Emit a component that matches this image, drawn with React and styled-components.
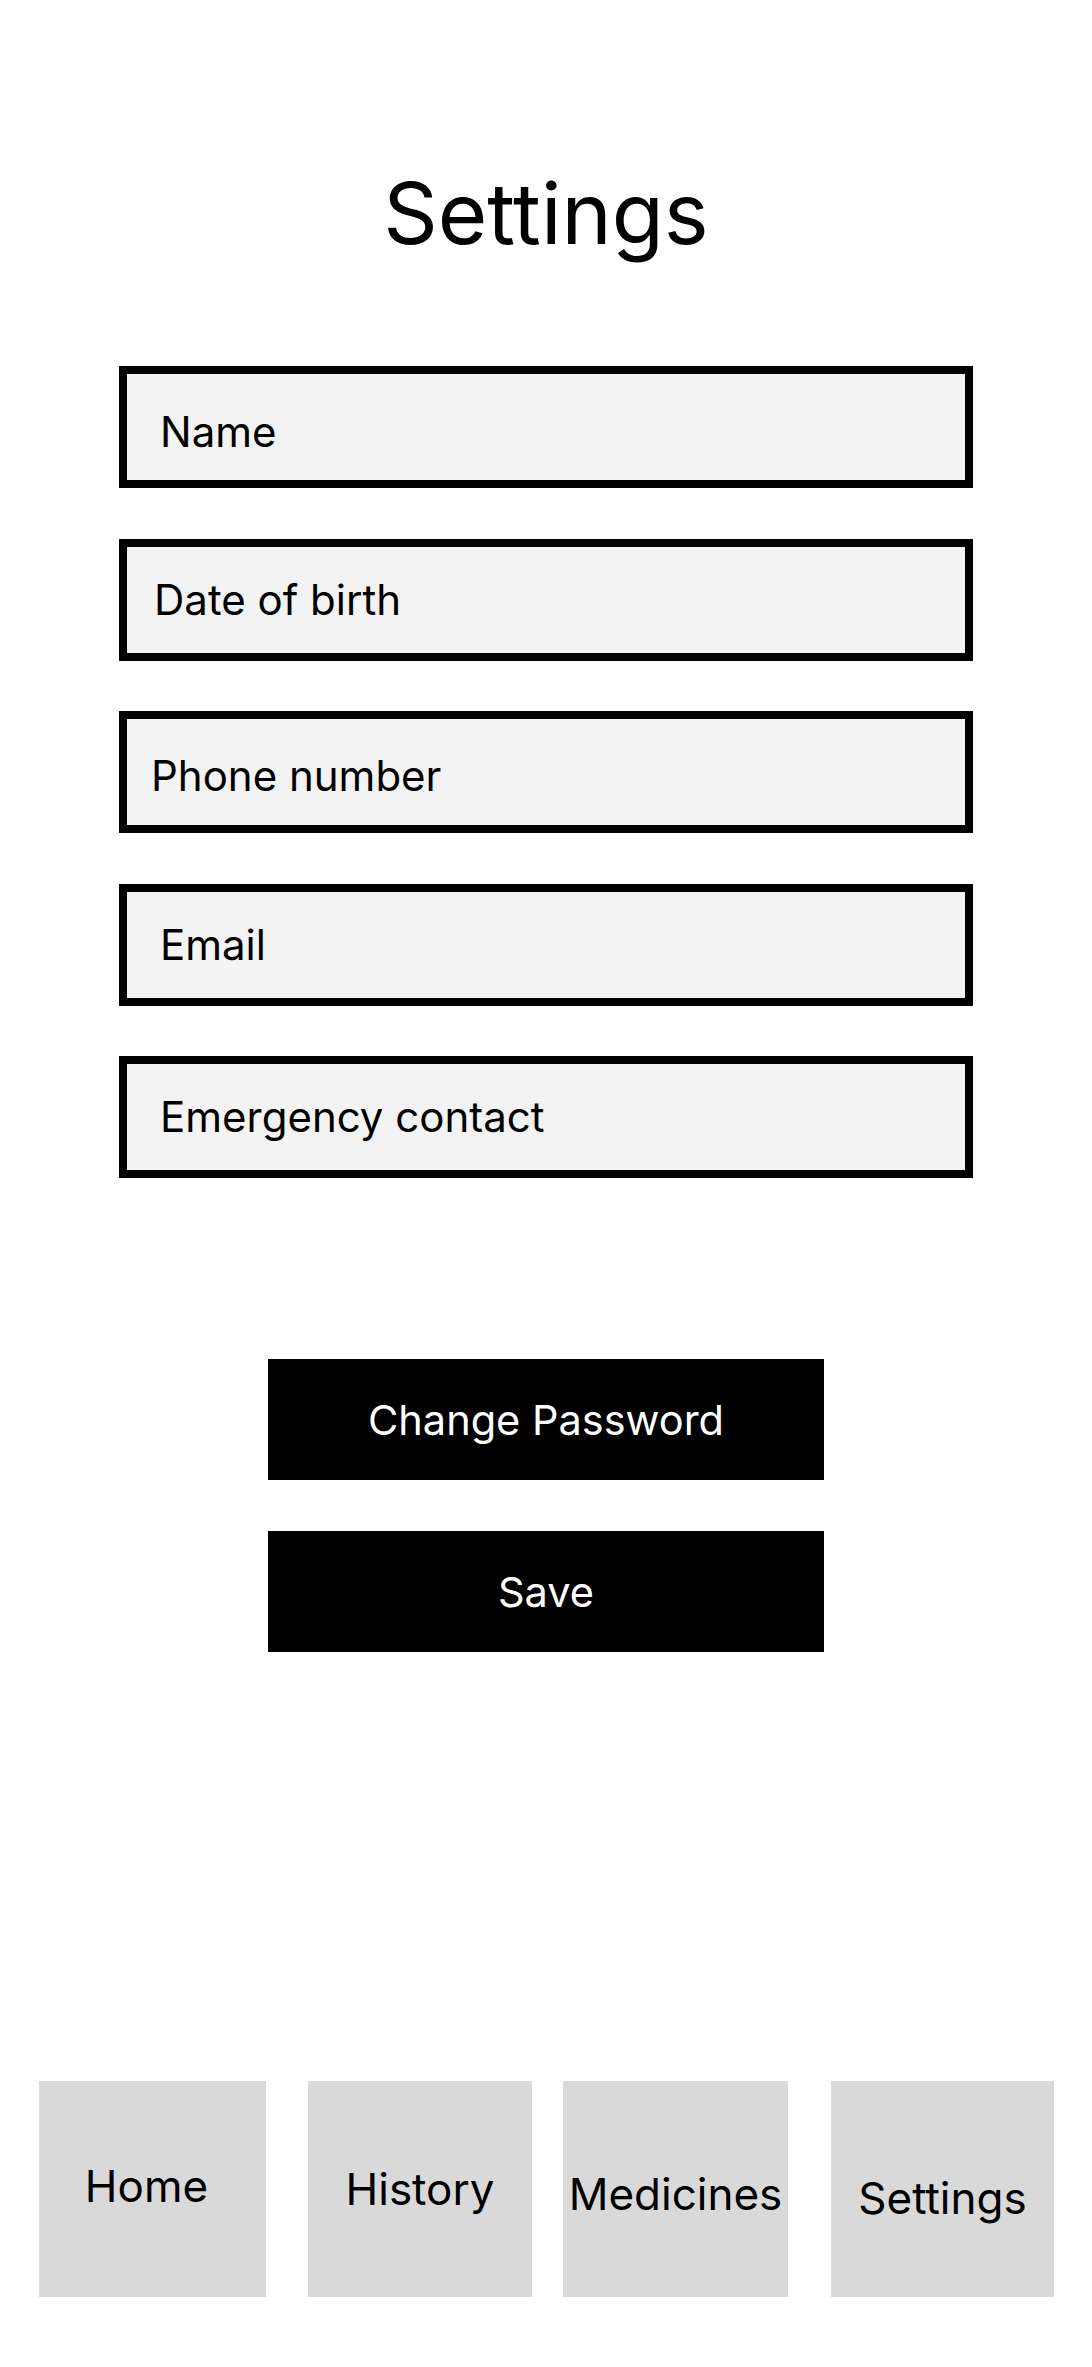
import React from 'react';
import styled, { createGlobalStyle } from 'styled-components';

const GlobalStyle = createGlobalStyle`
  body {
    margin: 0;
    background: #ffffff;
    font-family: Inter, "Liberation Sans", sans-serif;
    color: #000000;
  }
`;

const Page = styled.div`
  width: 1092px;
  min-height: 2367px;
  display: flex;
  flex-direction: column;
  align-items: center;
  box-sizing: border-box;
  padding-bottom: 70px;
`;

const Title = styled.h1`
  margin: 171px 0 0;
  font-size: 85px;
  font-weight: 400;
  line-height: 1;
`;

const Form = styled.div`
  margin-top: 110px;
  display: flex;
  flex-direction: column;
  gap: 50.5px;
`;

const Field = styled.div`
  width: 854px;
  height: 122px;
  box-sizing: border-box;
  border: 8px solid #000000;
  background: #f3f3f3;
  display: flex;
  align-items: center;
  padding-left: ${(props) => props.indent}px;
  padding-top: ${(props) => props.drop * 2}px;
`;

const FieldLabel = styled.span`
  font-size: 42px;
  line-height: 1;
`;

const Actions = styled.div`
  margin-top: 181px;
  display: flex;
  flex-direction: column;
  gap: 51px;
`;

const ActionButton = styled.button`
  width: 556px;
  height: 121px;
  border: none;
  border-radius: 0;
  background: #000000;
  color: #ffffff;
  font-family: Inter, "Liberation Sans", sans-serif;
  font-size: 41.5px;
  cursor: pointer;
`;

const NavBar = styled.nav`
  margin-top: auto;
  align-self: stretch;
  display: flex;
  padding-left: 39px;
`;

const NavTile = styled.div`
  width: ${(props) => props.width}px;
  height: 216px;
  margin-left: ${(props) => props.offset}px;
  background: #d9d9d9;
  display: flex;
  align-items: center;
  justify-content: center;
  font-size: 44px;
  padding-left: ${(props) => (props.dx < 0 ? 0 : props.dx * 2)}px;
  padding-right: ${(props) => (props.dx < 0 ? -props.dx * 2 : 0)}px;
  padding-top: ${(props) => (props.dy > 0 ? props.dy * 2 : 0)}px;
  padding-bottom: ${(props) => (props.dy < 0 ? -props.dy * 2 : 0)}px;
  box-sizing: border-box;
`;

const fields = [
  { label: 'Name', indent: 33, drop: 5 },
  { label: 'Date of birth', indent: 27, drop: 0 },
  { label: 'Phone number', indent: 24, drop: 4 },
  { label: 'Email', indent: 33, drop: 0 },
  { label: 'Emergency contact', indent: 33, drop: 0 },
];

const tabs = [
  { label: 'Home', width: 227, offset: 0, dx: -6, dy: -3 },
  { label: 'History', width: 224, offset: 42, dx: 0, dy: 0 },
  { label: 'Medicines', width: 225, offset: 31, dx: 0, dy: 5 },
  { label: 'Settings', width: 223, offset: 43, dx: 0, dy: 9 },
];

const App = () => {
  return (
    <>
      <GlobalStyle />
      <Page>
        <Title>Settings</Title>
        <Form>
          {fields.map((field) => (
            <Field key={field.label} indent={field.indent} drop={field.drop}>
              <FieldLabel>{field.label}</FieldLabel>
            </Field>
          ))}
        </Form>
        <Actions>
          <ActionButton>Change Password</ActionButton>
          <ActionButton>Save</ActionButton>
        </Actions>
        <NavBar>
          {tabs.map((tab) => (
            <NavTile
              key={tab.label}
              width={tab.width}
              offset={tab.offset}
              dx={tab.dx}
              dy={tab.dy}
            >
              {tab.label}
            </NavTile>
          ))}
        </NavBar>
      </Page>
    </>
  );
};

export default App;
